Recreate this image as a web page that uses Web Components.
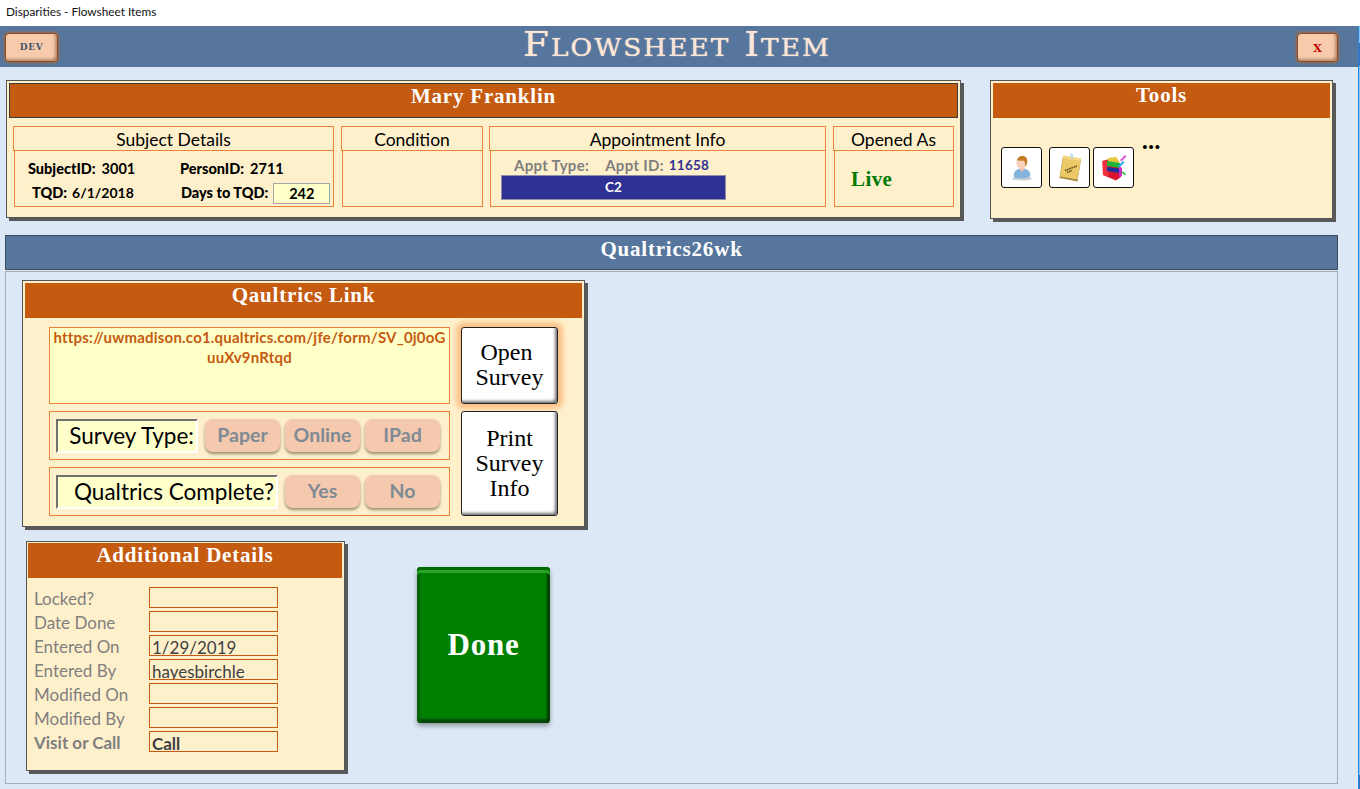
<!DOCTYPE html>
<html>
<head>
<meta charset="utf-8">
<title>Flowsheet Item</title>
<style>
  html, body { margin: 0; height: 100%; }
  body { background: #dce8f5; font-family: 'Lato', 'Liberation Sans', sans-serif; overflow: hidden; }
</style>
</head>
<body>
<form-header caption="Flowsheet Item"></form-header>

<top-row>
  <panel-card slot="patient" caption="Mary Franklin" outlined>
    <div slot="raw" style="display:flex;padding:8px 4px 0 4px">
      <group-box caption="Subject Details" style="width:321px"><subject-details></subject-details></group-box>
      <group-box caption="Condition" style="width:142px;margin-left:7px"></group-box>
      <group-box caption="Appointment Info" style="width:337px;margin-left:6px"><appt-info></appt-info></group-box>
      <group-box caption="Opened As" style="width:121px;margin-left:7px"><opened-as>Live</opened-as></group-box>
    </div>
  </panel-card>
  <panel-card slot="tools" caption="Tools" high>
    <tool-strip slot="raw"></tool-strip>
  </panel-card>
</top-row>

<section-panel caption="Qualtrics26wk">
  <survey-card></survey-card>
  <div style="display:flex;align-items:flex-start;margin-top:14px">
    <details-card></details-card>
    <done-button>Done</done-button>
  </div>
</section-panel>

<window-edge></window-edge>

<script>
(function() {
    'use strict';

const SERIF = "'Liberation Serif', serif";
const UI = "'Lato', 'Liberation Sans', sans-serif";

class FormHeader extends HTMLElement {
    connectedCallback() {
        const caption = this.getAttribute('caption');
        this.attachShadow({ mode: 'open' });
        this.shadowRoot.innerHTML = `
      <style>
        :host { display: block; }
        .win {
          height: 26px;
          background: #fff;
          font: 11.8px ${UI};
          color: #111;
          padding: 4px 0 0 6px;
          box-sizing: border-box;
        }
        .bar {
          height: 41px;
          box-sizing: border-box;
          background: #56769d;
          display: flex;
          align-items: center;
          justify-content: space-between;
          padding: 1px 22px 0 5px;
          position: relative;
        }
        h1 {
          position: absolute;
          left: 0; right: 6px; top: -2px;
          margin: 0;
          text-align: center;
          font: 400 34px/41px 'DejaVu Serif', serif;
          font-variant: small-caps;
          letter-spacing: 1.8px;
          transform: scaleX(1.1);
          color: #fbe5d6;
          text-shadow: 0 0 1px #fbe5d6;
        }
        button {
          height: 29px;
          background: #f8cbad;
          border: 1px solid #8a4b22;
          border-radius: 4px;
          box-shadow: 0 0 3px 1px #9c6a48, inset -3px -3px 3px -1px #b98a6c;
          padding: 0;
          font-family: 'DejaVu Serif', serif;
          font-weight: 700;
        }
        .dev { width: 53px; color: #44546a; font-size: 9px; letter-spacing: 0.6px; }
        .close { width: 41px; color: #c00000; font-size: 15px; font-variant: small-caps; position: relative; }
      </style>
      <div class="win">Disparities - Flowsheet Items</div>
      <div class="bar">
        <button class="dev">DEV</button>
        <h1>${caption}</h1>
        <button class="close">x</button>
      </div>
    `;
    }
}

customElements.define('form-header', FormHeader);

// thin strip of the window's scrollbar that shows along the right side
class WindowEdge extends HTMLElement {
    constructor() {
        super();
        this.attachShadow({ mode: 'open' });
        this.shadowRoot.innerHTML = `
      <style>
        :host {
          position: absolute;
          top: 26px; right: 0; bottom: 0;
          width: 2px;
          box-sizing: border-box;
          border-left: 1px solid #1e88e5;
          background: linear-gradient(#8fc3ee 17px, #3f6fb0 17px, #3f6fb0 40px, #8fc3ee 40px, #8fc3ee 749px, #3f6fb0 749px);
        }
      </style>
    `;
    }
}

customElements.define('window-edge', WindowEdge);

class TopRow extends HTMLElement {
    constructor() {
        super();
        this.attachShadow({ mode: 'open' });
        this.shadowRoot.innerHTML = `
      <style>
        :host { display: flex; gap: 29px; padding: 13px 0 0 6px; }
        ::slotted([slot=patient]) { width: 955px; }
        ::slotted([slot=tools]) { width: 343px; }
      </style>
      <slot name="patient"></slot>
      <slot name="tools"></slot>
    `;
    }
}

customElements.define('top-row', TopRow);

class PanelCard extends HTMLElement {
    constructor() {
        super();
        this.attachShadow({ mode: 'open' });
        this.shadowRoot.innerHTML = `
      <style>
        :host {
          display: block;
          box-sizing: border-box;
          background: #fff0cc;
          border: 1px solid #555;
          box-shadow: 3px 3px 0 #595959;
          padding: 2px;
          height: 138px;
        }
        :host([high]) { height: 139px; }
        .head {
          height: 35px;
          box-sizing: border-box;
          background: #c55a11;
          color: #fff;
          text-align: center;
          font: 700 21px/25px ${SERIF};
          letter-spacing: 0.8px;
        }
        :host([outlined]) .head { border: 1px solid #3b3b3b; }
      </style>
      <div class="head"></div>
      <slot name="raw"></slot>
    `;
    }

    connectedCallback() {
        this.shadowRoot.querySelector('.head').textContent = this.getAttribute('caption');
    }
}

customElements.define('panel-card', PanelCard);

class GroupBox extends HTMLElement {
    constructor() {
        super();
        this.attachShadow({ mode: 'open' });
        this.shadowRoot.innerHTML = `
      <style>
        :host { display: block; box-sizing: border-box; height: 81px; flex: none; }
        .cap {
          height: 25px;
          box-sizing: border-box;
          border: 1px solid #ec8238;
          text-align: center;
          font: 400 17.5px/25px ${UI};
          color: #000;
        }
        .body {
          height: 57px;
          margin: -1px 0 0 1px;
          box-sizing: border-box;
          border: 1px solid #ec8238;
        }
      </style>
      <div class="cap"></div>
      <div class="body"><slot></slot></div>
    `;
    }

    connectedCallback() {
        this.shadowRoot.querySelector('.cap').textContent = this.getAttribute('caption');
    }
}

customElements.define('group-box', GroupBox);

class SubjectDetails extends HTMLElement {
    constructor() {
        super();
        this.attachShadow({ mode: 'open' });
        this.shadowRoot.innerHTML = `
      <style>
        :host {
          display: grid;
          grid-template-columns: 152px 1fr;
          grid-template-rows: 24px 24px;
          padding: 6px 0 0 13px;
          font: 700 14.5px/24px ${UI};
          color: #000;
        }
        b { margin-right: 6px; }
        .tqd { padding-left: 4px; }
        .tqd b { margin-right: 5px; }
        .tqd span { font-size: 14px; }
        .days { display: flex; align-items: center; white-space: nowrap; padding-left: 1px; }
        .box {
          width: 57px; height: 21px;
          box-sizing: border-box;
          margin-left: 5px;
          background: #ffffcc;
          border: 1px solid #a6a6a6;
          text-align: center;
          line-height: 20px;
        }
      </style>
      <div><b>SubjectID:</b><span>3001</span></div>
      <div><b>PersonID:</b><span>2711</span></div>
      <div class="tqd"><b>TQD:</b><span>6/1/2018</span></div>
      <div class="days"><b style="margin:0">Days to TQD:</b><span class="box">242</span></div>
    `;
    }
}

customElements.define('subject-details', SubjectDetails);

class ApptInfo extends HTMLElement {
    constructor() {
        super();
        this.attachShadow({ mode: 'open' });
        this.shadowRoot.innerHTML = `
      <style>
        :host { display: block; padding: 4px 0 0 10px; font: 700 15px/20px ${UI}; color: #7f7f7f; }
        .row { display: flex; padding-left: 13px; white-space: nowrap; letter-spacing: 0.3px; }
        .id { margin-left: 16px; }
        .num { margin-left: 5px; color: #2e3192; font-size: 13.5px; letter-spacing: 0.2px; }
        .bar {
          width: 225px; height: 25px;
          box-sizing: border-box;
          background: #2e3192;
          border: 1px solid #8f8fa8;
          color: #fff;
          font-size: 13.5px;
          text-align: center;
          line-height: 23px;
        }
      </style>
      <div class="row"><span>Appt Type:</span><span class="id">Appt ID:</span><span class="num">11658</span></div>
      <div class="bar">C2</div>
    `;
    }
}

customElements.define('appt-info', ApptInfo);

class OpenedAs extends HTMLElement {
    constructor() {
        super();
        this.attachShadow({ mode: 'open' });
        this.shadowRoot.innerHTML = `
      <style>
        :host { display: block; padding: 15px 0 0 16px; font: 700 21px/26px ${SERIF}; color: #007a00; letter-spacing: 0.4px; }
      </style>
      <slot></slot>
    `;
    }
}

customElements.define('opened-as', OpenedAs);

const ICONS = {
    person: `<svg width="28" height="28" viewBox="0 0 28 28">
      <ellipse cx="14" cy="24.5" rx="10" ry="2" fill="#c9d0d6"/>
      <path d="M6 23c-1-4 1-7 6-8.500h4c5 1 7 4 6 8-5 2.500-11 2.500-16 .5z" fill="#84b4de"/>
      <path d="M11.500 15l2.500 3 2.500-3-.6-2.500h-3.800z" fill="#f2c4aa"/>
      <ellipse cx="13.200" cy="9" rx="4.800" ry="5.800" fill="#f9d2bd"/>
      <path d="M9 6.500C9.500 2.500 13 1.500 15.500 2c3 .6 4.500 3.600 3.500 7.500-.4 1.800-1.200 3-1.800 3.500.3-2.600 0-5-1.400-6.200C13.500 6.800 11 6.300 9 6.500z" fill="#c27a25"/>
    </svg>`,
    note: `<svg width="30" height="30" viewBox="0 0 30 30">
      <path d="M8 3l18 3.500-3.500 22L4.500 25z" fill="#a68743"/>
      <path d="M8.500 2.500L26 5.500 22.500 26.500 5 23.500z" fill="#ebc968"/>
      <path d="M8.500 2.500L26 5.500 25.500 8 8 5z" fill="#f3d985"/>
      <path d="M10 17.500l12-4.500M12 19.500l5-2" stroke="#5d4a1c" stroke-width="1.600" stroke-dasharray="1.500 .8"/>
      <path d="M15 0l3 1 .5 4.500-2.500.5z" fill="#c7dbe6"/>
    </svg>`,
    books: `<svg width="30" height="30" viewBox="0 0 30 30">
      <path d="M3.500 8L9 6.500V12L22 14V24L17 27.500L4 22z" fill="#d8152a"/>
      <path d="M3.500 8L9 6.500 9.500 24 4 22z" fill="#f0303f"/>
      <path d="M9 5L17 4L20 8V11L9 9z" fill="#e6c83c"/>
      <path d="M8 8L21 10V15L8 13z" fill="#1cb536"/>
      <path d="M8 14L20 15.500V20L8 18z" fill="#1c2f9c"/>
      <path d="M20 14L23 15V23L20 24z" fill="#cf2bc6"/>
      <path d="M21 7L26 2L27.500 3.500L22.500 8.500z" fill="#e45cdb"/>
      <path d="M19 13L24 8L25.500 9.500L20.500 14.500z" fill="#28a8ee"/>
      <path d="M23 18L27 21L26 22.500L22.500 19.500z" fill="#28c040"/>
    </svg>`
};

class ToolButton extends HTMLElement {
    connectedCallback() {
        this.attachShadow({ mode: 'open' });
        this.shadowRoot.innerHTML = `
      <style>
        :host {
          display: flex; align-items: center; justify-content: center;
          width: 41px; height: 41px;
          box-sizing: border-box;
          background: #fff;
          border: 1px solid #111;
          border-radius: 3px;
        }
      </style>
      ${ICONS[this.getAttribute('icon')]}
    `;
    }
}

customElements.define('tool-button', ToolButton);

class ToolStrip extends HTMLElement {
    constructor() {
        super();
        this.attachShadow({ mode: 'open' });
        this.shadowRoot.innerHTML = `
      <style>
        :host { display: flex; padding: 29px 0 0 8px; align-items: flex-start; }
        .dots { font: 900 24px/8px ${UI}; margin: -11px 0 0 8px; color: #000; letter-spacing: 0.6px; }
      </style>
      <tool-button icon="person"></tool-button>
      <tool-button icon="note" style="margin-left:7px"></tool-button>
      <tool-button icon="books" style="margin-left:3px"></tool-button>
      <span class="dots">...</span>
    `;
    }
}

customElements.define('tool-strip', ToolStrip);

class SectionPanel extends HTMLElement {
    connectedCallback() {
        const caption = this.getAttribute('caption');
        this.attachShadow({ mode: 'open' });
        this.shadowRoot.innerHTML = `
      <style>
        :host { display: block; margin: 16px 0 0 5px; width: 1333px; }
        .bar {
          height: 35px;
          box-sizing: border-box;
          background: #56769d;
          border: 1px solid #3f4c5c;
          color: #fff;
          text-align: center;
          font: 700 21px/27px ${SERIF};
          letter-spacing: 0.8px;
        }
        .body {
          height: 513px;
          margin-top: 1px;
          box-sizing: border-box;
          border: 1px solid #a6acb4;
          padding: 8px 0 0 16px;
        }
      </style>
      <div class="bar">${caption}</div>
      <div class="body"><slot></slot></div>
    `;
    }
}

customElements.define('section-panel', SectionPanel);

class PillButton extends HTMLElement {
    constructor() {
        super();
        this.attachShadow({ mode: 'open' });
        this.shadowRoot.innerHTML = `
      <style>
        :host {
          display: block;
          width: 75px; height: 33px;
          border-radius: 8px;
          background: #f4c9ae;
          box-shadow: 0 2px 3px rgba(70, 60, 40, 0.55);
          text-align: center;
          font: 700 19.5px/32px ${UI};
          color: #808a94;
        }
      </style>
      <slot></slot>
    `;
    }
}

customElements.define('pill-button', PillButton);

class ChoiceRow extends HTMLElement {
    connectedCallback() {
        this.attachShadow({ mode: 'open' });
        this.shadowRoot.innerHTML = `
      <style>
        :host {
          display: flex;
          align-items: center;
          box-sizing: border-box;
          height: 49px;
          border: 1px solid #ec8238;
          padding: 0 0 0 6px;
        }
        .lbl {
          height: 34px;
          width: ${this.getAttribute('label-width')}px;
          box-sizing: border-box;
          background: #ffffcc;
          border: 2px solid;
          border-color: #6f6f6f #fff #fff #6f6f6f;
          text-align: right;
          padding-right: 2px;
          font: 400 22.5px/30px ${UI};
          color: #000;
          white-space: nowrap;
          margin-right: 7px;
        }
        .opts { display: flex; gap: 5px; }
      </style>
      <div class="lbl">${this.getAttribute('label')}</div>
      <div class="opts"><slot></slot></div>
    `;
    }
}

customElements.define('choice-row', ChoiceRow);

class SurveyButton extends HTMLElement {
    constructor() {
        super();
        this.attachShadow({ mode: 'open' });
        this.shadowRoot.innerHTML = `
      <style>
        :host {
          display: flex;
          align-items: center;
          justify-content: center;
          box-sizing: border-box;
          width: 97px;
          background: #fff;
          border: 1px solid #222;
          border-radius: 3px;
          box-shadow: inset -3px -3px 3px -1px #777;
          text-align: center;
          font: 400 24px/25px ${SERIF};
          color: #000;
        }
        :host([glow]) {
          box-shadow: inset -3px -3px 3px -1px #777, 0 0 5px 5px #fbc28a;
          padding-bottom: 2px;
        }
      </style>
      <div><slot></slot></div>
    `;
    }
}

customElements.define('survey-button', SurveyButton);

class SurveyCard extends HTMLElement {
    constructor() {
        super();
        this.attachShadow({ mode: 'open' });
        this.shadowRoot.innerHTML = `
      <style>
        :host { display: block; }
        panel-card { width: 563px; height: 247px; }
        .grid {
          display: grid;
          grid-template-columns: 401px 97px;
          grid-template-rows: 77px 49px 49px;
          gap: 7px 11px;
          padding: 9px 0 0 24px;
        }
        .url {
          box-sizing: border-box;
          background: #ffffc8;
          border: 1px solid #ec8238;
          padding: 0 3px;
          text-align: center;
          font: 700 15px/19.5px ${UI};
          letter-spacing: 0.2px;
          color: #c55a11;
          white-space: nowrap;
        }
        survey-button.print { grid-row: span 2; }
      </style>
      <panel-card caption="Qaultrics Link">
        <div class="grid" slot="raw">
          <div class="url">https://uwmadison.co1.qualtrics.com/jfe/form/SV_0j0oG<br>uuXv9nRtqd</div>
          <survey-button glow>Open&nbsp;<br>Survey</survey-button>
          <choice-row label="Survey Type:" label-width="142">
            <pill-button>Paper</pill-button><pill-button>Online</pill-button><pill-button>IPad</pill-button>
          </choice-row>
          <survey-button class="print">Print<br>Survey<br>Info</survey-button>
          <choice-row label="Qualtrics Complete?" label-width="222">
            <pill-button>Yes</pill-button><pill-button>No</pill-button>
          </choice-row>
        </div>
      </panel-card>
    `;
    }
}

customElements.define('survey-card', SurveyCard);

class FieldRow extends HTMLElement {
    connectedCallback() {
        this.attachShadow({ mode: 'open' });
        this.shadowRoot.innerHTML = `
      <style>
        :host {
          display: flex;
          height: 21px;
          font: 400 17px/21px ${UI};
          color: #7f7f7f;
        }
        :host([strong]) { font-weight: 700; }
        .lbl { width: 115px; white-space: nowrap; padding-top: 1px; }
        .val {
          width: 129px;
          box-sizing: border-box;
          border: 1px solid #c55a11;
          padding: 2px 0 0 2px;
          line-height: 20px;
          overflow: hidden;
          color: #404040;
          white-space: nowrap;
        }
      </style>
      <div class="lbl">${this.getAttribute('label')}</div>
      <div class="val">${this.getAttribute('value') || ''}</div>
    `;
    }
}

customElements.define('field-row', FieldRow);

class DetailsCard extends HTMLElement {
    constructor() {
        super();
        this.attachShadow({ mode: 'open' });
        this.shadowRoot.innerHTML = `
      <style>
        :host { display: block; margin-left: 4px; }
        panel-card { width: 319px; height: 230px; padding: 1px 2px 1px 1px; }
        .rows { display: flex; flex-direction: column; gap: 3px; padding: 9px 0 0 6px; }
      </style>
      <panel-card caption="Additional Details">
        <div class="rows" slot="raw">
          <field-row label="Locked?"></field-row>
          <field-row label="Date Done"></field-row>
          <field-row label="Entered On" value="1/29/2019"></field-row>
          <field-row label="Entered By" value="hayesbirchle"></field-row>
          <field-row label="Modified On"></field-row>
          <field-row label="Modified By"></field-row>
          <field-row label="Visit or Call" value="Call" strong></field-row>
        </div>
      </panel-card>
    `;
    }
}

customElements.define('details-card', DetailsCard);

class DoneButton extends HTMLElement {
    constructor() {
        super();
        this.attachShadow({ mode: 'open' });
        this.shadowRoot.innerHTML = `
      <style>
        :host {
          display: flex;
          align-items: center;
          justify-content: center;
          box-sizing: border-box;
          width: 133px; height: 156px;
          margin: 26px 0 0 72px;
          background: #008000;
          border-radius: 4px;
          box-shadow:
            inset 0 3px 0 #006a00,
            inset 0 6px 1px #2aa52a,
            inset -3px 0 2px #003c00,
            inset 3px 0 2px #005c00,
            inset 0 -4px 2px #00480a,
            0 3px 5px rgba(0, 0, 0, 0.35);
          font: 700 31px ${SERIF};
          letter-spacing: 0.8px;
          color: #fff;
        }
      </style>
      <slot></slot>
    `;
    }
}

customElements.define('done-button', DoneButton);

})();
</script>
</body>
</html>
